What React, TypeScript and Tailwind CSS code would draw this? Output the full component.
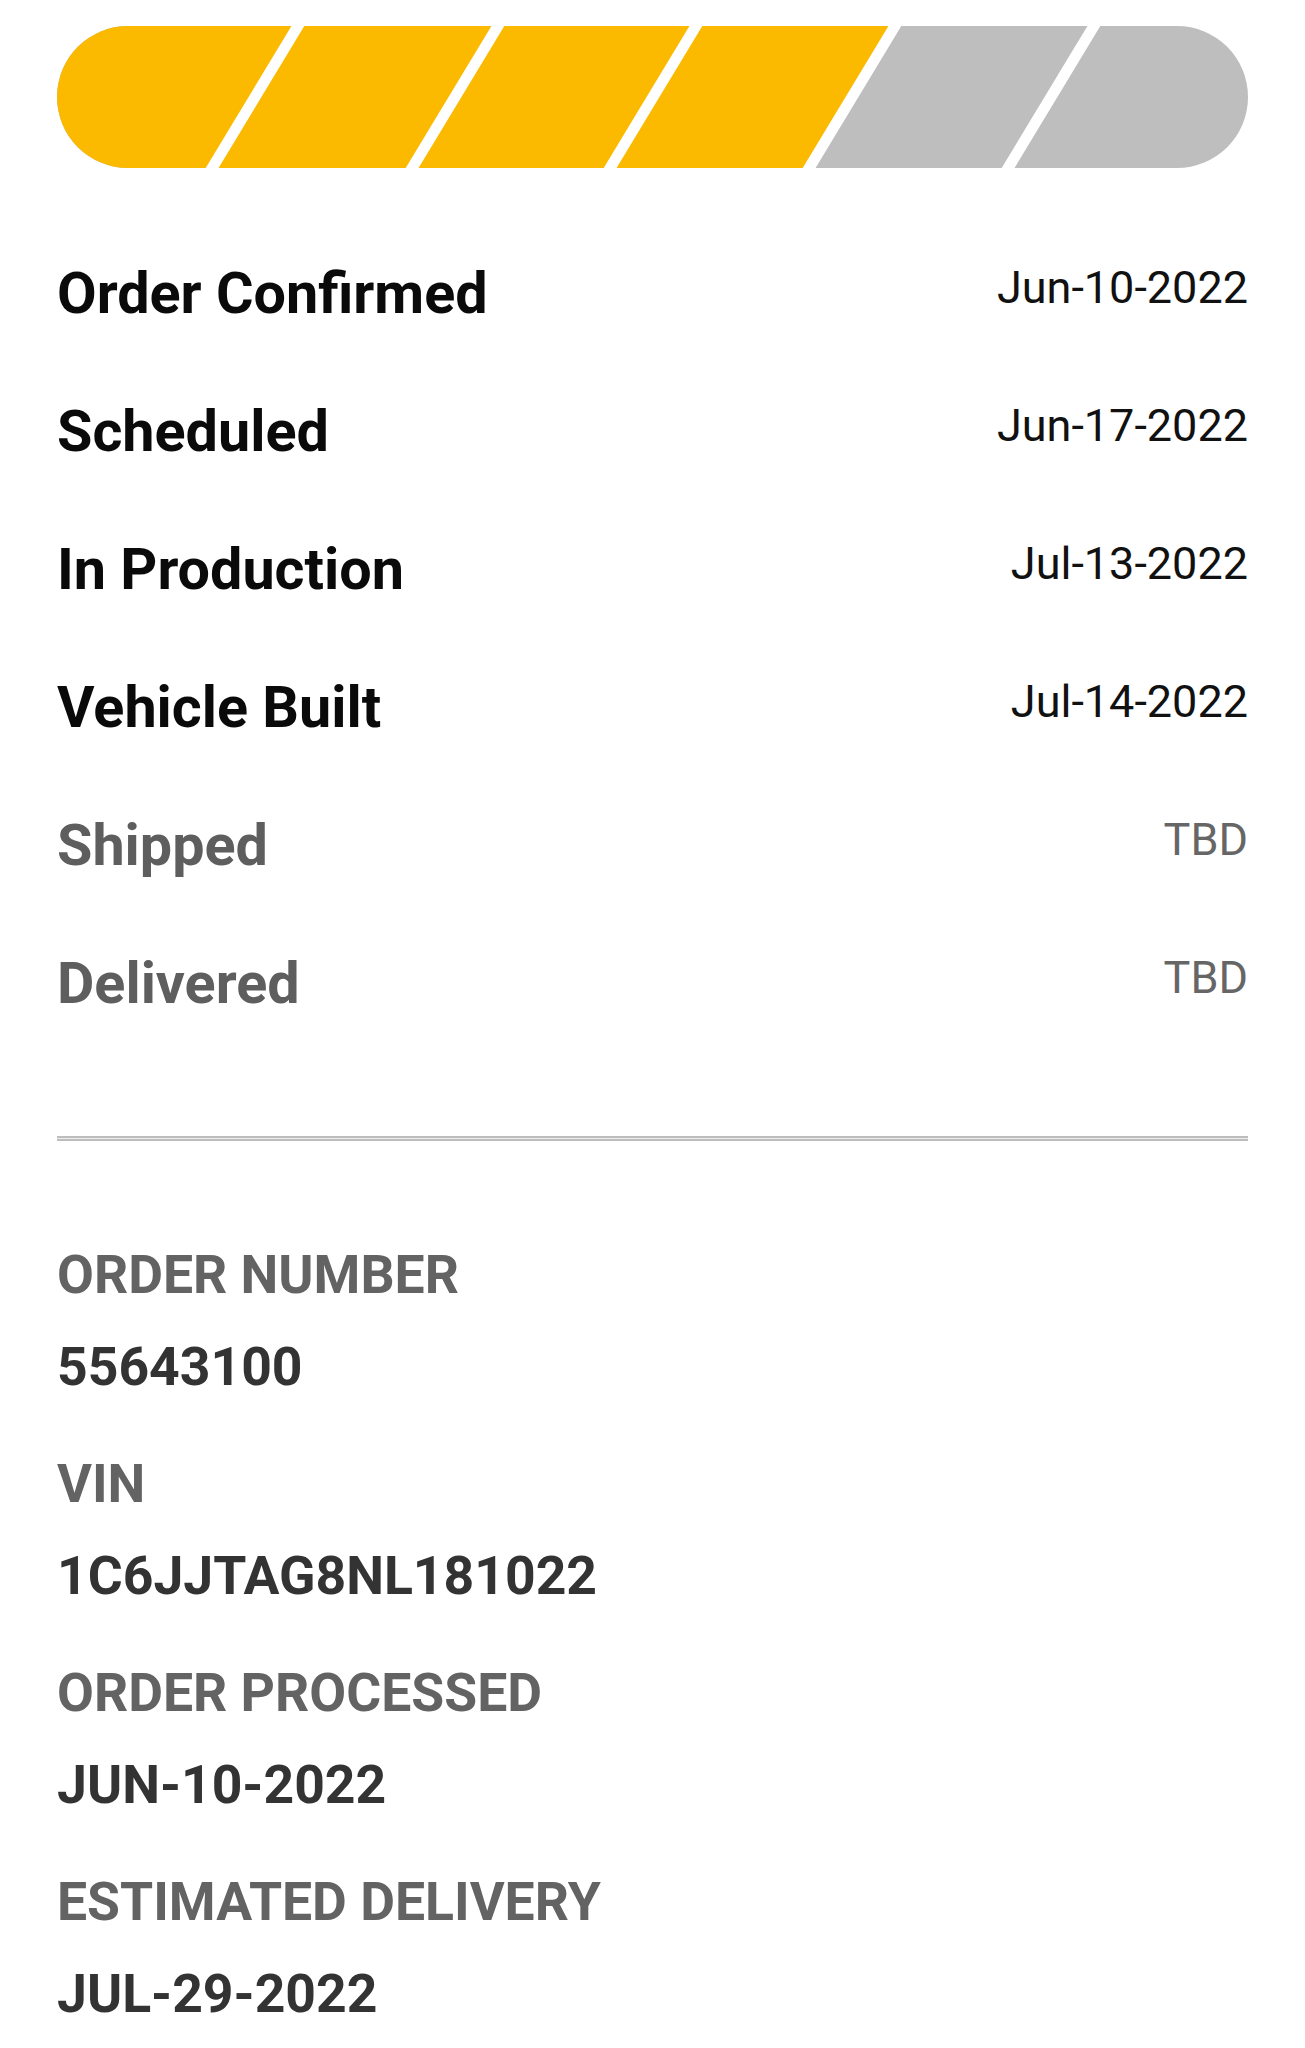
import React from "react";

const steps = [
  { label: "Order Confirmed", date: "Jun-10-2022", done: true },
  { label: "Scheduled", date: "Jun-17-2022", done: true },
  { label: "In Production", date: "Jul-13-2022", done: true },
  { label: "Vehicle Built", date: "Jul-14-2022", done: true },
  { label: "Shipped", date: "TBD", done: false },
  { label: "Delivered", date: "TBD", done: false },
];

const details = [
  { label: "ORDER NUMBER", value: "55643100" },
  { label: "VIN", value: "1C6JJTAG8NL181022" },
  { label: "ORDER PROCESSED", value: "JUN-10-2022" },
  { label: "ESTIMATED DELIVERY", value: "JUL-29-2022" },
];

// slanted separators, centre x at mid height
const cuts = [197, 397, 595, 794, 993];
const W = 1191;
const H = 142;
const SLANT = 41.5;

function ProgressBar() {
  const split = cuts[3];
  return (
    <svg viewBox={`0 0 ${W} ${H}`} className="block w-full h-[142px]">
      <defs>
        <clipPath id="pill">
          <rect x="0" y="0" width={W} height={H} rx={H / 2} />
        </clipPath>
      </defs>
      <g clipPath="url(#pill)">
        <rect x="0" y="0" width={W} height={H} fill="#bebebe" />
        <polygon
          points={`0,0 ${split + SLANT},0 ${split - SLANT},${H} 0,${H}`}
          fill="#fbba00"
        />
        {cuts.map((c) => (
          <line
            key={c}
            x1={c + SLANT + 6}
            y1={-6}
            x2={c - SLANT - 4}
            y2={H + 6}
            stroke="#ffffff"
            strokeWidth="11"
          />
        ))}
      </g>
    </svg>
  );
}

export default function App() {
  return (
    <div
      className="min-h-screen bg-white px-[57px] pt-[26px]"
      style={{ fontFamily: "Roboto, 'Liberation Sans', sans-serif" }}
    >
      <ProgressBar />

      <div className="mt-[57px]">
        {steps.map((s) => (
          <div key={s.label} className="flex items-start justify-between">
            <span
              className={`text-[57.5px] leading-[138px] font-bold ${
                s.done ? "text-[#0a0a0a]" : "text-[#5e5e5e]"
              }`}
            >
              {s.label}
            </span>
            <span
              className={`mt-[40px] text-[45px] leading-none ${
                s.done ? "text-[#111111]" : "text-[#666666]"
              }`}
            >
              {s.date}
            </span>
          </div>
        ))}
      </div>

      <div className="mt-[83px] h-[5px] border-t-2 border-b-2 border-[#bdbdbd] bg-[#ececec]" />

      <div className="mt-[88px] flex flex-col gap-[25px]">
        {details.map((d) => (
          <div key={d.label}>
            <div className="text-[53.5px] leading-[92px] font-bold text-[#636363]">{d.label}</div>
            <div className="text-[53.5px] leading-[92px] font-bold text-[#333333]">{d.value}</div>
          </div>
        ))}
      </div>
    </div>
  );
}
